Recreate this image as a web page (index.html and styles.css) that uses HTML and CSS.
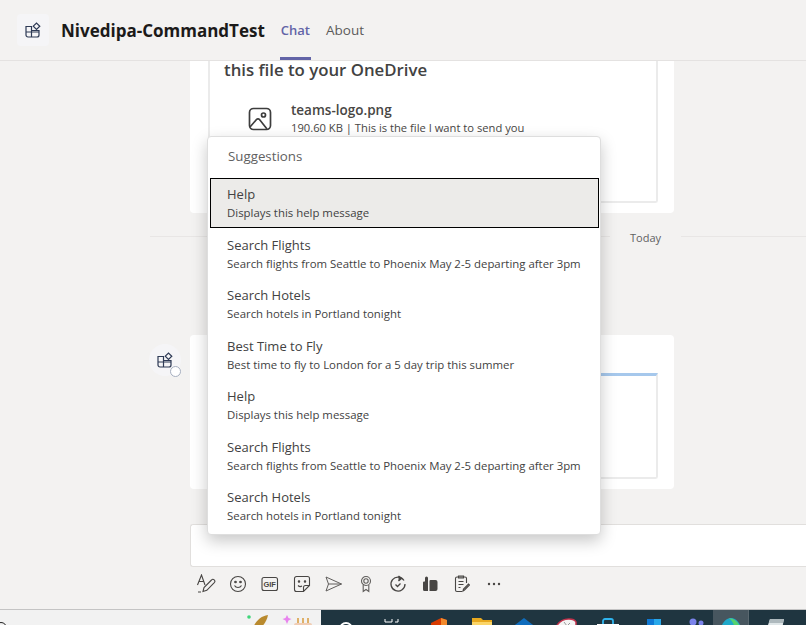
FILE: index.html
```html
<!DOCTYPE html>
<html lang="en">
<head>
<meta charset="UTF-8" />
<title>Nivedipa-CommandTest</title>
<link rel="stylesheet" href="styles.css">
</head>
<body>
<header class="topbar">
  <div class="app-icon">
    <svg width="16" height="16" viewBox="0 0 16 16" fill="none" stroke="#2e3a55" stroke-width="1.2"><path d="M1 4.5h5.5V15H3a2 2 0 0 1-2-2zM1 10h13M6.500 15H12a2 2 0 0 0 2-2V8.500H6.500"/><path d="M8.300 4.200 11.500 1l3.300 3.200-3.300 3.300z"/></svg>
  </div>
  <div class="app-name">Nivedipa-CommandTest</div>
  <nav class="tabs">
    <a class="tab active">Chat</a>
    <a class="tab">About</a>
  </nav>
</header>

<main class="chat">
  <section class="bubble first">
    <div class="inner-card">
      <div class="card-title">this file to your OneDrive</div>
      <div class="file-row">
        <svg class="file-icon" width="24" height="24" viewBox="0 0 24 24" fill="none" stroke="#3d3d3d" stroke-width="1.7"><rect x="1.500" y="1.500" width="21" height="21" rx="4"/><circle cx="15.500" cy="8" r="2"/><path d="M2 20l6.500-7.500a2 2 0 0 1 3 0L19 22"/></svg>
        <div>
          <div class="file-name">teams-logo.png</div>
          <div class="file-desc">190.60 KB | This is the file I want to send you</div>
        </div>
      </div>
    </div>
  </section>

  <div class="day-divider"><span>Today</span></div>

  <div class="message">
    <div class="avatar">
      <svg width="16" height="16" viewBox="0 0 16 16" fill="none" stroke="#2e3a55" stroke-width="1.2"><path d="M1 4.500h5.500V15H3a2 2 0 0 1-2-2zM1 10h13M6.500 15H12a2 2 0 0 0 2-2V8.500H6.500"/><path d="M8.300 4.200 11.500 1l3.300 3.200-3.300 3.300z"/></svg>
      <span class="status"></span>
    </div>
    <section class="bubble second">
      <div class="inner-card accent"></div>
    </section>
  </div>

  <div class="compose"></div>

  <div class="toolbar">
    <span class="tool"><svg width="20" height="20" viewBox="0 0 20 20" fill="none" stroke="#484644" stroke-width="1.100"><path d="M1.500 11 5.500 1l3.500 10M3 7.500h5"/><path d="M7 17.500l1-4 7.500-7.500a1.800 1.800 0 0 1 2.800 2.600L10.800 16.300zM2 18h3"/></svg></span>
    <span class="tool"><svg width="18" height="18" viewBox="0 0 18 18" fill="none" stroke="#484644" stroke-width="1.100"><circle cx="9" cy="9" r="7.500"/><path d="M5.500 10.500c1.500 2.700 5.500 2.700 7 0"/><circle cx="6.500" cy="7" r=".8" fill="#484644"/><circle cx="11.500" cy="7" r=".8" fill="#484644"/></svg></span>
    <span class="tool"><svg width="18" height="16" viewBox="0 0 18 16" fill="none" stroke="#484644" stroke-width="1.100"><rect x="1" y="1.500" width="15.500" height="13" rx="2"/><text class="gif-label" x="8.700" y="11">GIF</text></svg></span>
    <span class="tool"><svg width="18" height="18" viewBox="0 0 18 18" fill="none" stroke="#484644" stroke-width="1.100"><path d="M10.500 16.500H3.500a2 2 0 0 1-2-2v-11a2 2 0 0 1 2-2h11a2 2 0 0 1 2 2v7zM10.500 16.500v-4a2 2 0 0 1 2-2h4"/><path d="M5 10.500c1.200 1.200 3 1.200 4 .5"/><circle cx="6" cy="6.500" r=".7" fill="#484644"/><circle cx="12" cy="6.500" r=".7" fill="#484644"/></svg></span>
    <span class="tool"><svg width="18" height="16" viewBox="0 0 18 16" fill="none" stroke="#605e5c" stroke-width="1"><path d="M1 1l15.500 7L1 15l2.500-7zM3.500 8h13"/></svg></span>
    <span class="tool"><svg width="14" height="18" viewBox="0 0 14 18" fill="none" stroke="#605e5c" stroke-width="1.100"><circle cx="7" cy="6" r="4.500"/><circle cx="7" cy="6" r="2.200"/><path d="M4.200 10v6.500L7 14.500l2.800 2V10"/></svg></span>
    <span class="tool"><svg width="18" height="18" viewBox="0 0 18 18" fill="none" stroke="#484644" stroke-width="1.300"><path d="M15 5.500A7 7 0 1 0 16 9"/><path d="M9.500 1l3 2.500-3 2.500" fill="#484644"/><path d="M6.500 9.500l2 2 3-3"/></svg></span>
    <span class="tool"><svg width="16" height="16" viewBox="0 0 16 16" fill="#484644"><path d="M1 6.500a1 1 0 0 1 1-1h1V2a1.500 1.500 0 0 1 3 0v13H2.500A1.500 1.500 0 0 1 1 13.500z"/><path d="M7.500 15V5a1 1 0 0 1 1-1h5a2 2 0 0 1 2 2v7a2 2 0 0 1-2 2z"/></svg></span>
    <span class="tool"><svg width="16" height="18" viewBox="0 0 16 18" fill="none" stroke="#484644" stroke-width="1.100"><path d="M8 16.500H3a1.500 1.500 0 0 1-1.500-1.500V3.500A1.500 1.500 0 0 1 3 2h8a1.500 1.500 0 0 1 1.500 1.500V8"/><path d="M4.500 1h5v2h-5zM4.500 6.500h5M4.500 9.500h5M4.500 12.500h2M9 16l.5-2 5-5 1 1-5 5z"/></svg></span>
    <span class="tool"><svg width="14" height="4" viewBox="0 0 14 4" fill="#484644"><circle cx="2" cy="2" r="1.200"/><circle cx="7" cy="2" r="1.200"/><circle cx="12" cy="2" r="1.200"/></svg></span>
  </div>
</main>

<div class="suggestions">
  <div class="suggestions-title">Suggestions</div>
  <div class="suggestion selected"><div class="s-name">Help</div><div class="s-desc">Displays this help message</div></div>
  <div class="suggestion"><div class="s-name">Search Flights</div><div class="s-desc">Search flights from Seattle to Phoenix May 2-5 departing after 3pm</div></div>
  <div class="suggestion"><div class="s-name">Search Hotels</div><div class="s-desc">Search hotels in Portland tonight</div></div>
  <div class="suggestion"><div class="s-name">Best Time to Fly</div><div class="s-desc">Best time to fly to London for a 5 day trip this summer</div></div>
  <div class="suggestion"><div class="s-name">Help</div><div class="s-desc">Displays this help message</div></div>
  <div class="suggestion"><div class="s-name">Search Flights</div><div class="s-desc">Search flights from Seattle to Phoenix May 2-5 departing after 3pm</div></div>
  <div class="suggestion"><div class="s-name">Search Hotels</div><div class="s-desc">Search hotels in Portland tonight</div></div>
</div>

<footer class="taskbar">
  <div class="search-box">
    <span class="search-ring"></span>
    <span class="search-text">Type here to search</span>
    <span class="doodle">
      <svg width="68" height="15" viewBox="0 0 68 15"><circle cx="2" cy="2" r="1.800" fill="#3fd67a"/><path d="M5 15C8 7 13 1 21 0c-1 6-5 11-9 15z" fill="#b98a2e"/><path d="M21 15l9-4 2 4z" fill="#6a6a96"/><path d="M40 0l1.500 3 3 1-3 1.500L40 9l-1.500-3.500-3-1.500 3-1z" fill="#e884ee"/><rect x="47" y="8" width="18" height="7" rx="2" fill="#f0cdb4"/><path d="M51 3v5M56 3v5M61 3v5" stroke="#d99a3b" stroke-width="1.500"/></svg>
    </span>
  </div>
  <div class="tray">
    <span class="tray-item"><svg width="16" height="16" viewBox="0 0 16 16" fill="none" stroke="#fff" stroke-width="1.800"><circle cx="8" cy="9" r="6"/></svg></span>
    <span class="tray-item"><svg width="16" height="16" viewBox="0 0 16 16" fill="none" stroke="#fff" stroke-width="1"><path d="M1 1v3h7V1M11 4h3V1"/><path d="M1 12h14"/></svg></span>
    <span class="tray-item"><svg width="20" height="16" viewBox="0 0 20 16"><path d="M2 16V5l10-5 6 2v14z" fill="#d83b01"/><path d="M12 0l6 2v14h-6z" fill="#f28a2c"/></svg></span>
    <span class="tray-item"><svg width="22" height="16" viewBox="0 0 22 16"><path d="M1 0h9l2 2h9v14H1z" fill="#e8a91f"/><rect x="1" y="4" width="20" height="12" fill="#fbd568"/></svg></span>
    <span class="tray-item"><svg width="26" height="16" viewBox="0 0 26 16"><path d="M13 0l13 10H0z" fill="#0f6cbd"/></svg></span>
    <span class="tray-item"><svg width="22" height="16" viewBox="0 0 22 16"><path d="M1 9C4 3 9 1 14 1c3 0 6 1 7 3v12H1z" fill="#f3f3f3" stroke="#c4314b" stroke-width="1.500"/><path d="M9 4l3 4 3-3" stroke="#999" fill="none"/></svg></span>
    <span class="tray-item"><svg width="24" height="16" viewBox="0 0 24 16"><path d="M7 7V3a2 2 0 0 1 2-2h6a2 2 0 0 1 2 2v4" fill="none" stroke="#2fb4ee" stroke-width="1.800"/><rect x="1" y="6" width="22" height="10" fill="#fff"/></svg></span>
    <span class="tray-item"><svg width="24" height="16" viewBox="0 0 24 16"><rect x="9" y="1" width="14" height="15" fill="#28a8ea"/><rect x="9" y="1" width="7" height="7" fill="#0f78d4"/><rect x="1" y="7" width="12" height="9" fill="#0f5cab"/></svg></span>
    <span class="tray-item"><svg width="24" height="16" viewBox="0 0 24 16"><circle cx="13" cy="4" r="3.500" fill="#7b83eb"/><circle cx="21" cy="5" r="2.500" fill="#7b83eb"/><rect x="1" y="7" width="15" height="9" fill="#4e5fbf"/></svg></span>
    <span class="tray-item current"><svg width="24" height="16" viewBox="0 0 24 16"><path d="M1 16C2 6 7 1 12 1s10 5 11 15z" fill="#1fa8c9"/><path d="M10 1.200C16 1 21 6 23 16h-7C16 9 14 4 10 1.200z" fill="#55d36f"/></svg></span>
    <span class="tray-item last"><svg width="22" height="16" viewBox="0 0 22 16"><path d="M6 1h14l-3 15H1z" fill="#dfe6e8"/><path d="M6 1h14l-1 4H5z" fill="#aeb9bd"/></svg></span>
  </div>
</footer>
</body>
</html>
```

FILE: styles.css
```css
* {
  box-sizing: border-box;
}
html, body {
  margin: 0;
  height: 625px;
  overflow: hidden;
}
body {
  position: relative;
  background: #f3f2f1;
  font-family: "Open Sans", "Noto Sans", sans-serif;
  color: #252423;
  display: flex;
  flex-direction: column;
}

/* top bar */
.topbar {
  height: 61px;
  flex: none;
  display: flex;
  align-items: center;
  padding-left: 17px;
  border-bottom: 1px solid #e4e2e1;
}
.app-icon {
  width: 32px;
  height: 32px;
  margin-right: 12px;
  background: #f5f5f7;
  border-radius: 4px;
  display: flex;
  align-items: center;
  justify-content: center;
}
.app-name {
  font-size: 17px;
  font-weight: 700;
  color: #1b1a19;
  margin-right: 15px;
}
.tabs {
  display: flex;
  gap: 14px;
  align-self: stretch;
}
.tab {
  font-size: 13.500px;
  color: #5b5a59;
  height: 60px;
  padding: 3px 1px 0;
  display: flex;
  align-items: center;
  border-bottom: 3px solid transparent;
}
.tab.active {
  font-size: 13px;
  color: #6264a7;
  font-weight: 600;
  border-bottom-color: #6264a7;
}

/* chat column */
.chat {
  height: 548px;
  flex: none;
  overflow: hidden;
}
.bubble {
  margin-left: 190px;
  width: 484px;
  background: #fff;
  border-radius: 0 0 4px 4px;
  padding: 0 16px 10px 18px;
}
.bubble.first {
  height: 152px;
}
.inner-card {
  height: 100%;
  border: 2px solid #ebebeb;
  border-top: none;
  border-radius: 0 0 3px 3px;
  padding: 0 14px;
}
.card-title {
  font-size: 16.800px;
  font-weight: 600;
  color: #424242;
  height: 18px;
  line-height: 18px;
}
.file-row {
  display: flex;
  align-items: flex-start;
  gap: 19px;
  margin: 21px 0 0 24px;
}
.file-icon {
  flex: none;
  margin-top: 7px;
}
.file-name {
  font-size: 13.500px;
  font-weight: 600;
  color: #484644;
  line-height: 18px;
  margin-top: 1px;
}
.file-desc {
  font-size: 11.200px;
  color: #484644;
  line-height: 18px;
}

.day-divider {
  margin: 23px 0 0 150px;
  height: 1px;
  background: #e8e6e5;
  position: relative;
}
.day-divider span {
  position: absolute;
  left: 460px;
  top: -6px;
  padding: 0 20px;
  background: #f3f2f1;
  font-size: 11px;
  line-height: 16px;
  color: #616161;
}

.message {
  position: relative;
  margin-top: 98px;
}
.avatar {
  position: absolute;
  left: 149px;
  top: 9px;
  width: 32px;
  height: 32px;
  border-radius: 50%;
  background: #f5f5f7;
  display: flex;
  align-items: center;
  justify-content: center;
}
.status {
  position: absolute;
  right: 0;
  bottom: -1px;
  width: 11px;
  height: 11px;
  background: #fff;
  border: 1px solid #a6afc0;
  border-radius: 50%;
}
.bubble.second {
  height: 154px;
  border-radius: 4px;
  padding-top: 38px;
}
.inner-card.accent {
  border-top: 3px solid #a6c8ec;
}

.compose {
  margin: 35px 0 0 190px;
  height: 43px;
  background: #fff;
  border: 1px solid #e1dfdd;
  border-right: none;
  border-radius: 3px 0 0 3px;
}

.toolbar {
  display: flex;
  margin: 7px 0 0 190px;
  height: 20px;
}
.tool {
  width: 32px;
  flex: none;
  display: flex;
  align-items: center;
  justify-content: center;
}
.gif-label {
  font-family: "Liberation Sans", sans-serif;
  font-size: 7.500px;
  font-weight: 700;
  fill: #484644;
  stroke: none;
  text-anchor: middle;
}

/* suggestions popup */
.suggestions {
  position: absolute;
  left: 207px;
  top: 136px;
  width: 394px;
  height: 399px;
  background: #fff;
  border: 1px solid #dedede;
  border-radius: 4px;
  box-shadow: 0 6px 16px rgba(0, 0, 0, 0.22);
  padding: 0 1px 0 2px;
}
.suggestions-title {
  height: 41px;
  padding-left: 18px;
  font-size: 13.300px;
  line-height: 38px;
  color: #616161;
}
.suggestion {
  height: 50.400px;
  padding: 7px 0 0 17px;
}
.suggestion.selected {
  height: 50px;
  margin-bottom: 1px;
  background: #ecebe9;
  border: 1px solid #000;
  padding: 6px 0 0 16px;
}
.s-name {
  font-size: 13px;
  line-height: 19px;
  color: #424242;
}
.s-desc {
  font-size: 11.400px;
  line-height: 16px;
  margin-top: 1px;
  color: #424242;
  white-space: nowrap;
}

/* windows taskbar, only its top edge is on screen */
.taskbar {
  height: 16px;
  flex: none;
  display: flex;
  overflow: hidden;
  border-top: 1px solid #c4c4c4;
}
.search-box {
  width: 321px;
  flex: none;
  display: flex;
  background: #f2f2f2;
  position: relative;
}
.search-ring {
  position: absolute;
  left: -5px;
  top: 12px;
  width: 12px;
  height: 12px;
  border: 1px solid #222;
  border-radius: 50%;
}
.search-text {
  position: absolute;
  left: 17px;
  top: 12px;
  font-size: 14px;
  line-height: 18px;
  white-space: nowrap;
  color: #222;
}
.doodle {
  position: absolute;
  left: 247px;
  top: 5px;
  line-height: 0;
}
.tray {
  flex: 1;
  margin-top: -1px;
  display: flex;
  padding-left: 4px;
  background: #1f3540;
}
.tray-item {
  width: 42px;
  flex: none;
  display: flex;
  justify-content: center;
  align-items: flex-start;
  padding-top: 9px;
}
.tray-item:nth-child(1) {
  padding-top: 11px;
}
.tray-item:nth-child(2) {
  width: 50px;
}
.tray-item:nth-child(3) {
  width: 44px;
}
.tray-item.current {
  width: 36px;
  padding-top: 8px;
  background: #47565f;
  border-right: 1px solid #5a6870;
}
.tray-item.last {
  margin-left: 5px;
}
```
